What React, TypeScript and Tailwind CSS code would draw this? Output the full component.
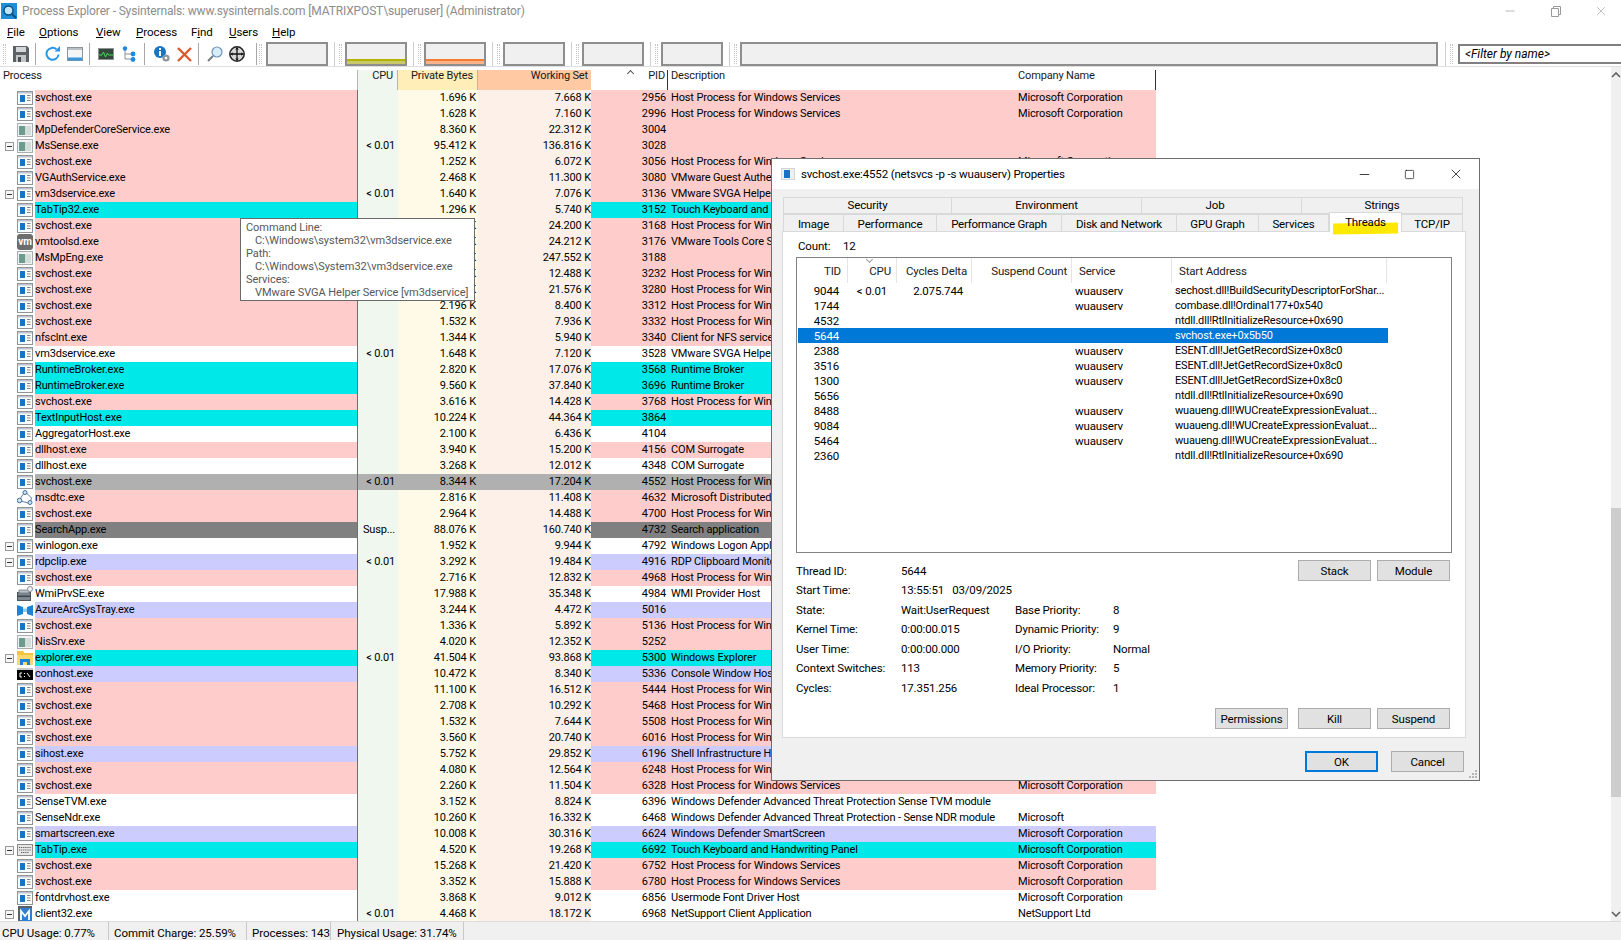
import React from "react"
import { Minus, Square, X } from "lucide-react"

type Tone = "pink" | "cyan" | "lav" | "white" | "gray" | "dark"
type Ico = "svc" | "def" | "vm" | "net" | "wmi" | "azure" | "folder" | "con" | "kb" | "m"
type Proc = {
  name: string
  priv: string
  ws: string
  pid: string
  desc?: string
  co?: string
  tone: Tone
  cpu?: string
  icon?: Ico
  open?: boolean
}

const HOST = "Host Process for Windows Services"
const MS = "Microsoft Corporation"

const procs: Proc[] = [
  { name: "svchost.exe", priv: "1.696", ws: "7.668", pid: "2956", desc: HOST, co: MS, tone: "pink" },
  { name: "svchost.exe", priv: "1.628", ws: "7.160", pid: "2996", desc: HOST, co: MS, tone: "pink" },
  { name: "MpDefenderCoreService.exe", priv: "8.360", ws: "22.312", pid: "3004", tone: "pink", icon: "def" },
  { name: "MsSense.exe", priv: "95.412", ws: "136.816", pid: "3028", tone: "pink", icon: "def", cpu: "< 0.01", open: true },
  { name: "svchost.exe", priv: "1.252", ws: "6.072", pid: "3056", desc: HOST, co: MS, tone: "pink" },
  { name: "VGAuthService.exe", priv: "2.468", ws: "11.300", pid: "3080", desc: "VMware Guest Authentication Service", tone: "pink" },
  { name: "vm3dservice.exe", priv: "1.640", ws: "7.076", pid: "3136", desc: "VMware SVGA Helper Service", tone: "pink", cpu: "< 0.01", open: true },
  { name: "TabTip32.exe", priv: "1.296", ws: "5.740", pid: "3152", desc: "Touch Keyboard and Handwriting Panel", tone: "cyan" },
  { name: "svchost.exe", priv: "6.120", ws: "24.200", pid: "3168", desc: HOST, tone: "pink" },
  { name: "vmtoolsd.exe", priv: "9.804", ws: "24.212", pid: "3176", desc: "VMware Tools Core Service", tone: "pink", icon: "vm" },
  { name: "MsMpEng.exe", priv: "201.340", ws: "247.552", pid: "3188", tone: "pink", icon: "def" },
  { name: "svchost.exe", priv: "2.984", ws: "12.488", pid: "3232", desc: HOST, tone: "pink" },
  { name: "svchost.exe", priv: "7.412", ws: "21.576", pid: "3280", desc: HOST, tone: "pink" },
  { name: "svchost.exe", priv: "2.196", ws: "8.400", pid: "3312", desc: HOST, tone: "pink" },
  { name: "svchost.exe", priv: "1.532", ws: "7.936", pid: "3332", desc: HOST, tone: "pink" },
  { name: "nfsclnt.exe", priv: "1.344", ws: "5.940", pid: "3340", desc: "Client for NFS service", tone: "pink" },
  { name: "vm3dservice.exe", priv: "1.648", ws: "7.120", pid: "3528", desc: "VMware SVGA Helper Service", tone: "white", cpu: "< 0.01" },
  { name: "RuntimeBroker.exe", priv: "2.820", ws: "17.076", pid: "3568", desc: "Runtime Broker", tone: "cyan" },
  { name: "RuntimeBroker.exe", priv: "9.560", ws: "37.840", pid: "3696", desc: "Runtime Broker", tone: "cyan" },
  { name: "svchost.exe", priv: "3.616", ws: "14.428", pid: "3768", desc: HOST, tone: "pink" },
  { name: "TextInputHost.exe", priv: "10.224", ws: "44.364", pid: "3864", tone: "cyan" },
  { name: "AggregatorHost.exe", priv: "2.100", ws: "6.436", pid: "4104", tone: "white" },
  { name: "dllhost.exe", priv: "3.940", ws: "15.200", pid: "4156", desc: "COM Surrogate", tone: "pink" },
  { name: "dllhost.exe", priv: "3.268", ws: "12.012", pid: "4348", desc: "COM Surrogate", tone: "white" },
  { name: "svchost.exe", priv: "8.344", ws: "17.204", pid: "4552", desc: HOST, tone: "gray", cpu: "< 0.01" },
  { name: "msdtc.exe", priv: "2.816", ws: "11.408", pid: "4632", desc: "Microsoft Distributed Transaction", tone: "pink", icon: "net" },
  { name: "svchost.exe", priv: "2.964", ws: "14.488", pid: "4700", desc: HOST, tone: "pink" },
  { name: "SearchApp.exe", priv: "88.076", ws: "160.740", pid: "4732", desc: "Search application", tone: "dark", cpu: "Susp..." },
  { name: "winlogon.exe", priv: "1.952", ws: "9.944", pid: "4792", desc: "Windows Logon Application", tone: "white", open: true },
  { name: "rdpclip.exe", priv: "3.292", ws: "19.484", pid: "4916", desc: "RDP Clipboard Monitor", tone: "lav", cpu: "< 0.01", open: true },
  { name: "svchost.exe", priv: "2.716", ws: "12.832", pid: "4968", desc: HOST, tone: "pink" },
  { name: "WmiPrvSE.exe", priv: "17.988", ws: "35.348", pid: "4984", desc: "WMI Provider Host", tone: "white", icon: "wmi" },
  { name: "AzureArcSysTray.exe", priv: "3.244", ws: "4.472", pid: "5016", tone: "lav", icon: "azure" },
  { name: "svchost.exe", priv: "1.336", ws: "5.892", pid: "5136", desc: HOST, tone: "pink" },
  { name: "NisSrv.exe", priv: "4.020", ws: "12.352", pid: "5252", tone: "pink", icon: "def" },
  { name: "explorer.exe", priv: "41.504", ws: "93.868", pid: "5300", desc: "Windows Explorer", tone: "cyan", cpu: "< 0.01", icon: "folder", open: true },
  { name: "conhost.exe", priv: "10.472", ws: "8.340", pid: "5336", desc: "Console Window Host", tone: "lav", icon: "con" },
  { name: "svchost.exe", priv: "11.100", ws: "16.512", pid: "5444", desc: HOST, tone: "pink" },
  { name: "svchost.exe", priv: "2.708", ws: "10.292", pid: "5468", desc: HOST, tone: "pink" },
  { name: "svchost.exe", priv: "1.532", ws: "7.644", pid: "5508", desc: HOST, tone: "pink" },
  { name: "svchost.exe", priv: "3.560", ws: "20.740", pid: "6016", desc: HOST, tone: "pink" },
  { name: "sihost.exe", priv: "5.752", ws: "29.852", pid: "6196", desc: "Shell Infrastructure Host", tone: "lav" },
  { name: "svchost.exe", priv: "4.080", ws: "12.564", pid: "6248", desc: HOST, tone: "pink" },
  { name: "svchost.exe", priv: "2.260", ws: "11.504", pid: "6328", desc: HOST, co: MS, tone: "pink" },
  { name: "SenseTVM.exe", priv: "3.152", ws: "8.824", pid: "6396", desc: "Windows Defender Advanced Threat Protection Sense TVM module", tone: "white" },
  { name: "SenseNdr.exe", priv: "10.260", ws: "16.332", pid: "6468", desc: "Windows Defender Advanced Threat Protection - Sense NDR module", co: "Microsoft", tone: "white" },
  { name: "smartscreen.exe", priv: "10.008", ws: "30.316", pid: "6624", desc: "Windows Defender SmartScreen", co: MS, tone: "lav" },
  { name: "TabTip.exe", priv: "4.520", ws: "19.268", pid: "6692", desc: "Touch Keyboard and Handwriting Panel", co: MS, tone: "cyan", icon: "kb", open: true },
  { name: "svchost.exe", priv: "15.268", ws: "21.420", pid: "6752", desc: HOST, co: MS, tone: "pink" },
  { name: "svchost.exe", priv: "3.352", ws: "15.888", pid: "6780", desc: HOST, co: MS, tone: "pink" },
  { name: "fontdrvhost.exe", priv: "3.868", ws: "9.012", pid: "6856", desc: "Usermode Font Driver Host", co: MS, tone: "white" },
  { name: "client32.exe", priv: "4.468", ws: "18.172", pid: "6968", desc: "NetSupport Client Application", co: "NetSupport Ltd", tone: "white", cpu: "< 0.01", icon: "m", open: true },
]

const toneBg: Record<Tone, string> = {
  pink: "bg-[#ffcccc]",
  cyan: "bg-[#00e8e8]",
  lav: "bg-[#ccccff]",
  white: "bg-white",
  gray: "bg-[#b0b0b0]",
  dark: "bg-[#808080]",
}

const threads = [
  ["9044", "< 0.01", "2.075.744", "wuauserv", "sechost.dll!BuildSecurityDescriptorForShar..."],
  ["1744", "", "", "wuauserv", "combase.dll!Ordinal177+0x540"],
  ["4532", "", "", "", "ntdll.dll!RtlInitializeResource+0x690"],
  ["5644", "", "", "", "svchost.exe+0x5b50"],
  ["2388", "", "", "wuauserv", "ESENT.dll!JetGetRecordSize+0x8c0"],
  ["3516", "", "", "wuauserv", "ESENT.dll!JetGetRecordSize+0x8c0"],
  ["1300", "", "", "wuauserv", "ESENT.dll!JetGetRecordSize+0x8c0"],
  ["5656", "", "", "", "ntdll.dll!RtlInitializeResource+0x690"],
  ["8488", "", "", "wuauserv", "wuaueng.dll!WUCreateExpressionEvaluat..."],
  ["9084", "", "", "wuauserv", "wuaueng.dll!WUCreateExpressionEvaluat..."],
  ["5464", "", "", "wuauserv", "wuaueng.dll!WUCreateExpressionEvaluat..."],
  ["2360", "", "", "", "ntdll.dll!RtlInitializeResource+0x690"],
]

const details = [
  ["Thread ID:", "5644", "", ""],
  ["Start Time:", "13:55:51   03/09/2025", "", ""],
  ["State:", "Wait:UserRequest", "Base Priority:", "8"],
  ["Kernel Time:", "0:00:00.015", "Dynamic Priority:", "9"],
  ["User Time:", "0:00:00.000", "I/O Priority:", "Normal"],
  ["Context Switches:", "113", "Memory Priority:", "5"],
  ["Cycles:", "17.351.256", "Ideal Processor:", "1"],
]

function ProcIcon({ kind = "svc" }: { kind?: Ico }) {
  if (kind === "def")
    return (
      <svg className="shrink-0" width="16" height="16" viewBox="0 0 16 16">
        <rect x="0.5" y="1.5" width="15" height="13" fill="#f2f4f4" stroke="#a9adb0" />
        <rect x="2" y="4" width="6" height="9" fill="#6d9c8e" />
        <rect x="8" y="4" width="6" height="9" fill="#d3dedb" />
      </svg>
    )
  if (kind === "vm")
    return (
      <svg className="shrink-0" width="16" height="16" viewBox="0 0 16 16">
        <rect x="0" y="0" width="16" height="16" rx="3" fill="#6d6d6d" />
        <text x="8" y="11" textAnchor="middle" fontSize="10" fontWeight="700" fill="#fff">vm</text>
      </svg>
    )
  if (kind === "net")
    return (
      <svg className="shrink-0" width="16" height="16" viewBox="0 0 16 16" fill="none">
        <path d="M8 1.5L2 10.5 13 13.5 14.5 8z" stroke="#5f7f9e" />
        <circle cx="8" cy="2.5" r="2" fill="#cfe2f2" stroke="#3f6f9c" />
        <circle cx="2.5" cy="10.5" r="2.3" fill="#cfe2f2" stroke="#3f6f9c" />
        <circle cx="13" cy="12.5" r="2" fill="#cfe2f2" stroke="#3f6f9c" />
      </svg>
    )
  if (kind === "wmi")
    return (
      <svg className="shrink-0" width="16" height="16" viewBox="0 0 16 16">
        <rect x="0.5" y="6.5" width="13" height="8" fill="#7c8790" stroke="#4f5860" />
        <rect x="2" y="4" width="10" height="3" fill="#b8c0c6" stroke="#68727a" strokeWidth="0.7" />
        <rect x="0.5" y="9.5" width="13" height="1.5" fill="#3d464d" />
        <circle cx="13" cy="3" r="2.5" fill="#f4f4f4" stroke="#8a8f94" />
      </svg>
    )
  if (kind === "azure")
    return (
      <svg className="shrink-0" width="16" height="16" viewBox="0 0 16 16">
        <path d="M0 3l6 2v7l-6 2z" fill="#1b84d8" />
        <path d="M16 3l-6 2v7l6 2z" fill="#1b84d8" />
        <rect x="6" y="6.5" width="4" height="3.5" fill="#8fd0f4" />
      </svg>
    )
  if (kind === "folder")
    return (
      <svg className="shrink-0" width="16" height="16" viewBox="0 0 16 16">
        <path d="M0 1h6l1.5 2H16v12H0z" fill="#f5c342" />
        <path d="M0 5h16v10H0z" fill="#fbd970" />
        <path d="M3 15V9h10v6h-3v-3H6v3z" fill="#1b84d8" />
      </svg>
    )
  if (kind === "con")
    return (
      <svg className="shrink-0" width="16" height="16" viewBox="0 0 16 16">
        <rect x="0" y="2" width="16" height="12" fill="#000" />
        <rect x="0" y="2" width="16" height="2" fill="#c8c8c8" />
        <path d="M5 7H3v4h2M7 7.5h1M7 10.5h1M10 7l3 4h0" fill="none" stroke="#fff" />
      </svg>
    )
  if (kind === "kb")
    return (
      <svg className="shrink-0" width="16" height="16" viewBox="0 0 16 16">
        <rect x="0.5" y="2.5" width="15" height="11" fill="#e8e8e8" stroke="#8a8a8a" />
        <path d="M2 5.5h12M2 8h12M4 10.5h8" stroke="#555" strokeWidth="1.2" strokeDasharray="1.2 0.9" />
      </svg>
    )
  if (kind === "m")
    return (
      <svg className="shrink-0" width="16" height="16" viewBox="0 0 16 16">
        <rect x="1" y="0" width="14" height="16" fill="#5b6067" />
        <rect x="3" y="2" width="12" height="14" fill="#2f7fd1" />
        <path d="M4 14V5l4 5 4-5v9" fill="none" stroke="#fff" strokeWidth="1.8" />
      </svg>
    )
  return (
    <svg className="shrink-0" width="16" height="16" viewBox="0 0 16 16">
      <rect x="0.5" y="1.5" width="15" height="13" fill="#fff" stroke="#8f9499" />
      <rect x="1" y="2" width="14" height="1.6" fill="#c3c8cc" />
      <rect x="3" y="5" width="5" height="7" fill="#1572c9" />
      <path d="M10 5.5h3.5M10 8h3.5M10 10.5h3.5" stroke="#7c8388" />
    </svg>
  )
}

function Row({ p }: { p: Proc }) {
  const bg = toneBg[p.tone]
  const sel = p.tone === "gray"
  return (
    <div className="flex h-4 w-[1156px] shrink-0 leading-[15px] whitespace-nowrap">
      <div className="flex w-[35px] shrink-0 items-center bg-white">
        <div className="flex w-[17px] shrink-0 justify-end pr-[3px]">
          {p.open && (
            <div className="flex h-[9px] w-[9px] items-center justify-center border border-[#9a9a9a] bg-[#f6f6f6]">
              <div className="h-px w-[5px] bg-[#333]" />
            </div>
          )}
        </div>
        <ProcIcon kind={p.icon} />
      </div>
      <div className={`w-[323px] shrink-0 border-r border-[#6f6f6f] ${bg}`}>{p.name}</div>
      <div className={`w-[40px] shrink-0 pr-[3px] text-right ${sel ? "bg-[#b0b0b0]" : "bg-[#eff7ef]"}`}>{p.cpu}</div>
      <div className={`w-[80px] shrink-0 pr-[2px] text-right ${sel ? "bg-[#b0b0b0]" : "bg-[#fffae8]"}`}>{p.priv} K</div>
      <div className={`w-[113px] shrink-0 text-right ${sel ? "bg-[#b0b0b0]" : "bg-[#fdf0e8]"}`}>{p.ws} K</div>
      <div className={`w-[76px] shrink-0 pr-[1px] text-right ${bg}`}>{p.pid}</div>
      <div className={`w-[350px] shrink-0 overflow-hidden pl-[4px] ${bg}`}>{p.desc}</div>
      <div className={`w-[139px] shrink-0 pl-[1px] ${bg}`}>{p.co}</div>
    </div>
  )
}

function Grip() {
  return (
    <div className="flex h-full shrink-0 items-center gap-[4px]">
      <div className="h-full w-px bg-[#cfcfcf]" />
      <div className="h-[20px] w-[3px] border-x border-dotted border-[#c4c4c4]" />
    </div>
  )
}

function Sep() {
  return <div className="h-[22px] w-px bg-[#a8a8a8]" />
}

function Toolbar() {
  return (
    <div className="flex h-[24px] shrink-0 items-center">
      <div className="ml-[3px] h-[20px] w-[3px] shrink-0 border-x border-dotted border-[#c4c4c4]" />
      <svg className="ml-[7px] shrink-0" width="16" height="16" viewBox="0 0 16 16">
        <path d="M0 0h14l2 2v14H0z" fill="#5c6165" />
        <rect x="3" y="1" width="10" height="5" fill="#d4d7d9" />
        <rect x="3" y="9" width="10" height="7" fill="#c3c6c8" />
        <rect x="5" y="11" width="3" height="5" fill="#4b4f53" />
      </svg>
      <div className="ml-[6px] shrink-0"><Sep /></div>
      <svg className="ml-[9px] shrink-0" width="16" height="16" viewBox="0 0 16 16" fill="none">
        <path d="M13.5 8.5a6 6 0 1 1-2-5.2" stroke="#2a95e6" strokeWidth="2" />
        <path d="M9.5 5.5h5.5V0z" fill="#2a95e6" />
      </svg>
      <svg className="ml-[6px] shrink-0" width="16" height="14" viewBox="0 0 16 14">
        <rect x="0.5" y="0.5" width="15" height="13" fill="#f3f5f7" stroke="#8c939a" />
        <rect x="1" y="1" width="14" height="2" fill="#b9c0c6" />
        <rect x="1" y="10.5" width="14" height="3" fill="#3d97da" />
      </svg>
      <div className="ml-[6px] shrink-0"><Sep /></div>
      <svg className="ml-[8px] shrink-0" width="16" height="12" viewBox="0 0 16 12" fill="none">
        <rect x="0.5" y="0.5" width="15" height="11" fill="#33473c" stroke="#8e9591" />
        <path d="M1 7h3l1.5-3 2 5 2-4 1 2H15" stroke="#3fdc4c" />
      </svg>
      <svg className="ml-[8px] shrink-0" width="14" height="16" viewBox="0 0 14 16" fill="none">
        <path d="M3 3v10h6M3 8h6" stroke="#8a8f94" />
        <circle cx="3" cy="2.5" r="2.2" fill="#1d8ae0" />
        <circle cx="11" cy="8" r="2.4" fill="#1d8ae0" />
        <circle cx="11" cy="13.5" r="2.4" fill="#1d8ae0" />
      </svg>
      <div className="ml-[8px] shrink-0"><Sep /></div>
      <svg className="ml-[9px] shrink-0" width="16" height="16" viewBox="0 0 16 16">
        <circle cx="6" cy="6" r="6" fill="#1874c4" />
        <rect x="5" y="5" width="2" height="5" fill="#fff" />
        <rect x="5" y="2" width="2" height="2" fill="#fff" />
        <circle cx="12" cy="12" r="3.6" fill="#8d969c" />
        <circle cx="12" cy="12" r="1.3" fill="#fff" />
      </svg>
      <svg className="ml-[7px] shrink-0" width="15" height="15" viewBox="0 0 15 15" fill="none">
        <path d="M1 1l13 13M14 1L1 14" stroke="#e0572b" strokeWidth="2.4" />
      </svg>
      <div className="ml-[6px] shrink-0"><Sep /></div>
      <svg className="ml-[8px] shrink-0" width="16" height="16" viewBox="0 0 16 16" fill="none">
        <circle cx="10" cy="6" r="5" fill="#d7edfb" stroke="#6f93b0" strokeWidth="1.2" />
        <path d="M6 10l-5 5" stroke="#747b81" strokeWidth="2" />
      </svg>
      <svg className="ml-[6px] shrink-0" width="16" height="16" viewBox="0 0 16 16" fill="none">
        <circle cx="8" cy="8" r="7.2" fill="#d8d8d8" stroke="#222" strokeWidth="1.5" />
        <path d="M8 1.5v13M1.5 8h13" stroke="#111" strokeWidth="1.3" />
        <path d="M6.2 3.6L8 1.6l1.8 2zM6.2 12.4L8 14.4l1.8-2zM3.6 6.2L1.6 8l2 1.8zM12.4 6.2L14.4 8l-2 1.8z" fill="#111" />
      </svg>
      <div className="ml-[11px] shrink-0"><Sep /></div>
      <div className="ml-[2px] h-[20px] w-[3px] shrink-0 border-x border-dotted border-[#c4c4c4]" />
      <div className="ml-[4px] h-[24px] w-[62px] shrink-0 border-2 border-[#8e8e8e] bg-[#f0f0f0]" />
      <div className="ml-[6px] h-[24px] shrink-0"><Grip /></div>
      <div className="ml-[3px] flex h-[24px] w-[62px] shrink-0 flex-col justify-end border-2 border-[#8e8e8e] bg-[#f0f0f0]">
        <div className="h-[2px] bg-[#b3b300]" />
        <div className="h-[3px] bg-[#c9c96a]" />
      </div>
      <div className="ml-[6px] h-[24px] shrink-0"><Grip /></div>
      <div className="ml-[3px] flex h-[24px] w-[62px] shrink-0 flex-col justify-end border-2 border-[#8e8e8e] bg-[#f0f0f0]">
        <div className="h-[2px] bg-[#f57c30]" />
        <div className="h-[3px] bg-[#fbb48a]" />
      </div>
      <div className="ml-[6px] h-[24px] shrink-0"><Grip /></div>
      <div className="ml-[3px] h-[24px] w-[62px] shrink-0 border-2 border-[#8e8e8e] bg-[#f0f0f0]" />
      <div className="ml-[6px] h-[24px] shrink-0"><Grip /></div>
      <div className="ml-[3px] h-[24px] w-[62px] shrink-0 border-2 border-[#8e8e8e] bg-[#f0f0f0]" />
      <div className="ml-[6px] h-[24px] shrink-0"><Grip /></div>
      <div className="ml-[3px] h-[24px] w-[62px] shrink-0 border-2 border-[#8e8e8e] bg-[#f0f0f0]" />
      <div className="ml-[6px] h-[24px] shrink-0"><Grip /></div>
      <div className="ml-[3px] h-[24px] w-[698px] shrink-0 border-2 border-[#8e8e8e] bg-[#f0f0f0]" />
      <div className="ml-[7px] h-[24px] shrink-0"><Grip /></div>
      <div className="ml-[5px] flex h-[20px] w-[180px] shrink-0 items-center border-2 border-[#808080] bg-white pl-[5px] text-[12px] tracking-normal italic">&lt;Filter by name&gt;</div>
    </div>
  )
}

function Btn({ label, primary }: { label: string; primary?: boolean }) {
  return (
    <div
      className={`flex h-[21px] w-[73px] items-center justify-center bg-[#e1e1e1] ${
        primary ? "border-2 border-[#0078d7]" : "border border-[#adadad]"
      }`}
    >
      {label}
    </div>
  )
}

function Tab({ label, w, active, low }: { label: string; w: string; active?: boolean; low?: boolean }) {
  if (active)
    return (
      <div className={`${w} relative z-10 -mt-[2px] flex h-[20px] justify-center border border-b-0 border-[#d9d9d9] bg-white leading-[18px]`}>
        <div className="absolute top-[10px] left-[3px] h-[11px] w-[65px] -rotate-1 bg-[#ffe900]" />
        <span className="relative">{label}</span>
      </div>
    )
  return (
    <div className={`${w} flex h-full items-center justify-center border-y border-r border-[#d9d9d9] leading-[13px] first:border-l ${low ? "pt-[2px]" : ""}`}>{label}</div>
  )
}

function Dialog() {
  return (
    <div className="absolute top-[158px] left-[771px] flex h-[623px] w-[709px] flex-col border border-[#6e6e6e] bg-[#f0f0f0] text-[11.5px] tracking-[-0.16px]">
      <div className="flex h-[30px] shrink-0 items-center bg-white pl-[9px]">
        <svg width="14" height="12" viewBox="0 0 14 12">
          <rect x="0" y="0" width="14" height="12" fill="#d0d4d8" />
          <rect x="1" y="1" width="12" height="10" fill="#eef0f2" />
          <rect x="3" y="2" width="6" height="8" fill="#1572c9" />
        </svg>
        <span className="ml-[6px]">svchost.exe:4552 (netsvcs -p -s wuauserv) Properties</span>
        <Minus className="ml-auto h-[15px] w-[15px] text-black" strokeWidth={1.2} />
        <Square className="ml-[32px] h-[11px] w-[11px] text-black" strokeWidth={1.4} absoluteStrokeWidth />
        <X className="mr-[15px] ml-[33px] h-[16px] w-[16px] text-black" strokeWidth={1.1} />
      </div>
      <div className="flex min-h-0 flex-1 flex-col pt-[8px] pr-[13px] pl-[10px]">
        <div className="ml-[1px] flex h-[17px] shrink-0">
          <Tab label="Security" w="w-[169px]" />
          <Tab label="Environment" w="w-[190px]" />
          <Tab label="Job" w="w-[160px] pr-[13px]" />
          <Tab label="Strings" w="w-[161px]" />
        </div>
        <div className="ml-[1px] flex h-[18px] shrink-0">
          <Tab label="Image" w="w-[61px]" low />
          <Tab label="Performance" w="w-[93px]" low />
          <Tab label="Performance Graph" w="w-[125px] tracking-[-0.25px]" low />
          <Tab label="Disk and Network" w="w-[115px] tracking-[-0.25px]" low />
          <Tab label="GPU Graph" w="w-[82px]" low />
          <Tab label="Services" w="w-[70px]" low />
          <Tab label="Threads" w="w-[73px]" active />
          <Tab label="TCP/IP" w="w-[61px]" low />
        </div>
        <div className="-mt-px flex h-[507px] shrink-0 flex-col border border-[#d9d9d9] bg-white pt-[6px] pl-[13px]">
          <div className="flex h-4 shrink-0 items-center pl-[2px]">
            <span className="w-[45px]">Count:</span>
            <span>12</span>
          </div>
          <div className="mt-[3px] h-[296px] w-[656px] shrink-0 border border-[#828282]">
            <div className="relative flex h-[25px] items-start text-[#222]">
              <div className="h-[25px] w-[51px] border-r border-[#e5e5e5] pt-[5px] pr-[6px] text-right">TID</div>
              <div className="h-[25px] w-[49px] border-r border-[#e5e5e5] pt-[5px] pr-[5px] text-right">CPU</div>
              <div className="h-[25px] w-[75px] border-r border-[#e5e5e5] pt-[5px] pr-[4px] text-right">Cycles Delta</div>
              <div className="h-[25px] w-[100px] border-r border-[#e5e5e5] pt-[5px] pr-[4px] text-right">Suspend Count</div>
              <div className="h-[25px] w-[100px] border-r border-[#e5e5e5] pt-[5px] pl-[7px]">Service</div>
              <div className="h-[25px] w-[215px] border-r border-[#e5e5e5] pt-[5px] pl-[7px]">Start Address</div>
              <div className="absolute top-[-1px] left-[70px] h-[5px] w-[5px] rotate-45 border-r border-b border-[#999]" />
            </div>
            {threads.map((t) => {
              const on = t[0] === "5644"
              return (
                <div key={t[0]} className="flex h-[15px] whitespace-nowrap">
                  <div className={`ml-px flex w-[590px] pt-[1px] leading-[14px] ${on ? "bg-[#0078d7] text-white" : ""}`}>
                    <div className="w-[41px] text-right">{t[0]}</div>
                    <div className="w-[48px] text-right">{t[1]}</div>
                    <div className="w-[76px] text-right">{t[2]}</div>
                    <div className="w-[112px]" />
                    <div className="w-[100px]">{t[3]}</div>
                    <div className="w-[213px] text-[11px] tracking-[-0.17px]">{t[4]}</div>
                  </div>
                </div>
              )
            })}
          </div>
          <div className="mt-[7px] flex h-[169px] w-[654px] justify-between">
            <div className="pt-px">
              {details.map((d) => (
                <div key={d[0]} className="flex h-[19.5px] items-center whitespace-nowrap">
                  <div className="w-[105px]">{d[0]}</div>
                  <div className="w-[114px] whitespace-pre">{d[1]}</div>
                  <div className="w-[98px]">{d[2]}</div>
                  <div>{d[3]}</div>
                </div>
              ))}
            </div>
            <div className="flex flex-col items-end justify-between">
              <div className="flex gap-[6px]">
                <Btn label="Stack" />
                <Btn label="Module" />
              </div>
              <div className="flex gap-[6px]">
                <div className="mr-[4px]"><Btn label="Permissions" /></div>
                <Btn label="Kill" />
                <Btn label="Suspend" />
              </div>
            </div>
          </div>
        </div>
        <div className="mt-[13px] mr-[2px] flex justify-end gap-[13px]">
          <Btn label="OK" primary />
          <Btn label="Cancel" />
        </div>
      </div>
      <svg className="absolute right-[1px] bottom-[1px]" width="10" height="10" viewBox="0 0 10 10" fill="#b5b5b5">
        <rect x="7" y="1" width="2" height="2" />
        <rect x="4" y="4" width="2" height="2" />
        <rect x="7" y="4" width="2" height="2" />
        <rect x="1" y="7" width="2" height="2" />
        <rect x="4" y="7" width="2" height="2" />
        <rect x="7" y="7" width="2" height="2" />
      </svg>
    </div>
  )
}

function Tooltip() {
  return (
    <div className="absolute top-[218px] left-[240px] h-[83px] w-[235px] border border-[#6a6a6a] bg-white pt-[2px] pl-[5px] leading-[13px] tracking-[-0.05px] whitespace-nowrap text-[#575757]">
      <div>Command Line:</div>
      <div className="pl-[9px]">C:\Windows\system32\vm3dservice.exe</div>
      <div>Path:</div>
      <div className="pl-[9px]">C:\Windows\System32\vm3dservice.exe</div>
      <div>Services:</div>
      <div className="pl-[9px]">VMware SVGA Helper Service [vm3dservice]</div>
    </div>
  )
}

export default function App() {
  return (
    <div className="relative flex h-[940px] w-[1621px] flex-col overflow-hidden bg-white font-['Roboto',sans-serif] text-[11px] leading-4 tracking-[-0.15px] text-black">
      <div className="flex h-[22px] shrink-0 items-center pl-[1px] text-[12px] tracking-[-0.14px] text-[#8c8c8c]">
        <svg width="16" height="16" viewBox="0 0 16 16" fill="none">
          <rect x="0" y="0" width="16" height="16" fill="#1e8fd6" />
          <circle cx="7.5" cy="7.5" r="4.5" fill="#bfe3f7" stroke="#0d4f80" strokeWidth="1.5" />
          <path d="M11 11l4 4" stroke="#0d4f80" strokeWidth="2" />
        </svg>
        <span className="ml-[5px]">Process Explorer - Sysinternals: www.sysinternals.com [MATRIXPOST\superuser] (Administrator)</span>
        <Minus className="ml-auto h-[14px] w-[14px] text-[#9a9a9a]" strokeWidth={1.2} />
        <svg className="ml-[33px]" width="12" height="12" viewBox="0 0 12 12" fill="none" stroke="#9a9a9a">
          <path d="M1.5 3.5h7v8h-7zM3.5 3.5v-2h7v8h-2" />
        </svg>
        <X className="mr-[13px] ml-[32px] h-[14px] w-[14px] text-[#9a9a9a]" strokeWidth={1.1} />
      </div>
      <div className="flex h-[20px] shrink-0 items-center pl-[7px] text-[11.5px] tracking-[-0.05px]">
        <span className="w-[32px]"><u>F</u>ile</span>
        <span className="w-[57px]"><u>O</u>ptions</span>
        <span className="w-[40px]"><u>V</u>iew</span>
        <span className="w-[55px]"><u>P</u>rocess</span>
        <span className="w-[38px]">F<u>i</u>nd</span>
        <span className="w-[43px]"><u>U</u>sers</span>
        <span><u>H</u>elp</span>
      </div>
      <Toolbar />
      <div className="h-px shrink-0 bg-[#dedede]" />
      <div className="flex min-h-0 flex-1 overflow-hidden">
        <div className="flex min-w-0 flex-1 flex-col pt-[3px]">
          <div className="flex h-[20px] w-[1156px] shrink-0 items-start leading-[12px] text-[#1a1a1a]">
            <div className="h-[20px] w-[358px] border-r border-[#b5b5b5] pl-[3px]">Process</div>
            <div className="h-[20px] w-[40px] border-r border-[#b5b5b5] bg-[#eff7ef] pr-[4px] text-right">CPU</div>
            <div className="h-[20px] w-[80px] border-r border-[#b5b5b5] bg-[#ffeeb8] pr-[4px] text-right">Private Bytes</div>
            <div className="h-[20px] w-[113px] bg-[#ffc9a3] pr-[3px] text-right">Working Set</div>
            <div className="relative h-[20px] w-[77px] border-r border-[#333] pr-[2px] text-right">
              PID
              <div className="absolute top-[1px] left-[37px] h-[5px] w-[5px] rotate-45 border-t border-l border-[#555]" />
            </div>
            <div className="h-[20px] w-[349px] pl-[3px]">Description</div>
            <div className="h-[20px] w-[139px] border-r border-[#333] pl-[1px]">Company Name</div>
          </div>
          <div className="min-h-0 flex-1 overflow-hidden">
            {procs.map((p) => (
              <Row key={p.pid} p={p} />
            ))}
          </div>
        </div>
        <div className="flex w-[10px] shrink-0 flex-col bg-[#f0f0f0]">
          <svg className="mt-[5px] shrink-0" width="10" height="6" viewBox="0 0 10 6" fill="none" stroke="#606060" strokeWidth="1.6">
            <path d="M1 5l4-4 4 4" />
          </svg>
          <div className="mt-[430px] h-[289px] shrink-0 bg-[#cdcdcd]" />
          <svg className="mt-[114px] shrink-0" width="10" height="6" viewBox="0 0 10 6" fill="none" stroke="#606060" strokeWidth="1.6">
            <path d="M1 1l4 4 4-4" />
          </svg>
        </div>
      </div>
      <div className="flex h-[19px] shrink-0 border-t border-[#dcdcdc] bg-[#f0f0f0] text-[11.5px] tracking-[-0.05px] whitespace-nowrap">
        <div className="h-full w-[109px] border-r border-[#c8c8c8] pt-[3px] pl-[2px]">CPU Usage: 0.77%</div>
        <div className="h-full w-[138px] border-r border-[#c8c8c8] pt-[3px] pl-[5px]">Commit Charge: 25.59%</div>
        <div className="h-full w-[84px] border-r border-[#c8c8c8] pt-[3px] pl-[5px]">Processes: 143</div>
        <div className="h-full w-[133px] border-r border-[#c8c8c8] pt-[3px] pl-[6px]">Physical Usage: 31.74%</div>
      </div>
      <Tooltip />
      <Dialog />
    </div>
  )
}
